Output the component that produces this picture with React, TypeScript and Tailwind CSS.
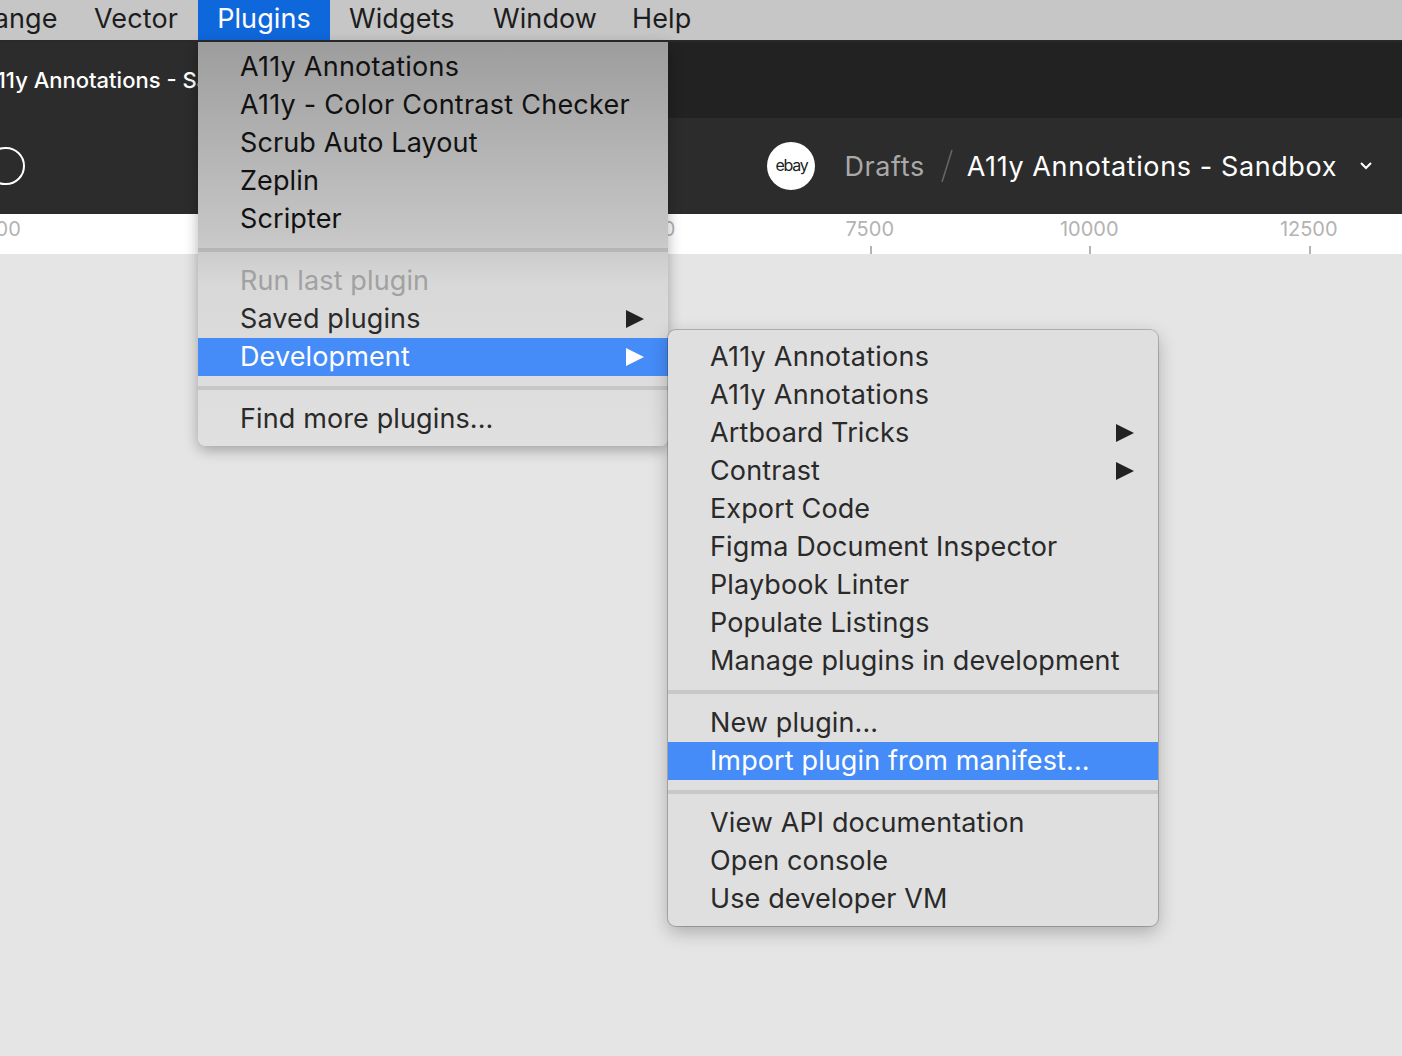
const font = "font-['Inter','Noto_Sans',sans-serif]";

function Arrow({ white }: { white?: boolean }) {
  return (
    <svg width="18" height="18" viewBox="0 0 18 18" className={white ? "fill-white" : "fill-[#222]"}>
      <path d="M0 0 L18 9 L0 18 Z" />
    </svg>
  );
}

function Item({
  label,
  active,
  disabled,
  arrow,
  dark,
}: {
  label: string;
  active?: boolean;
  disabled?: boolean;
  arrow?: boolean;
  dark?: boolean;
}) {
  let color = "text-[#2a2a2a]";
  if (dark) color = "text-[#111]";
  if (disabled) color = "text-[#a1a1a1]";
  if (active) color = "text-white";
  const spacing = label.startsWith("A11y") ? "tracking-[0.25px]" : "tracking-[0.12px]";
  return (
    <div
      className={`flex h-[38px] items-center justify-between pl-[42px] pr-[24px] whitespace-nowrap text-[27px] ${spacing} ${color} ${
        active ? "bg-[#458cf8]" : ""
      }`}
    >
      <span>{label}</span>
      {arrow && <Arrow white={active} />}
    </div>
  );
}

function Sep() {
  return <div className="my-2.5 h-1 bg-black/10" />;
}

const ticks = ["-2500", "0", "2500", "5000", "7500", "10000", "12500"];

export default function App() {
  return (
    <div className={`relative h-[1056px] w-[1402px] overflow-hidden bg-[#e5e5e5] ${font}`}>
      {/* mac menu bar */}
      <div className="flex h-10 items-center overflow-hidden bg-[#c6c6c6] text-[27px] tracking-[0.1px] text-[#1d1d1d]">
        <span className="-ml-[46px] w-[140px] pb-[2px]">Arrange</span>
        <span className="w-[104px] pb-[2px]">Vector</span>
        <span className="flex h-full w-[132px] items-center justify-center bg-[#0f67dc] pb-[2px] text-white">Plugins</span>
        <span className="ml-[19px] w-[144px] pb-[2px]">Widgets</span>
        <span className="w-[139px] pb-[2px]">Window</span>
        <span className="pb-[2px]">Help</span>
      </div>
      <div className="h-0.5 bg-[#2a2a2a]" />

      {/* tab bar */}
      <div className="h-[76px] bg-[#222222]">
        <div className="flex h-full w-[198px] items-center overflow-hidden bg-[#2c2c2c]">
          <span className="-ml-[18px] whitespace-nowrap text-[22px] font-medium text-white">
            A11y Annotations - Sandbox
          </span>
        </div>
      </div>

      {/* toolbar */}
      <div className="flex h-24 items-center justify-between bg-[#2c2c2c] pr-[30px]">
        <div className="-ml-[14px] h-[38px] w-[39px] rounded-full border-2 border-white" />
        <div className="flex items-center">
          <div className="flex h-12 w-12 items-center justify-center rounded-full bg-white pb-[2px] text-base tracking-[-1.3px] text-[#222]">
            ebay
          </div>
          <span className="ml-[29px] pt-[2px] text-[27px] tracking-[0.6px] text-[#a9a9a9]">Drafts</span>
          <svg width="14" height="34" viewBox="0 0 14 34" className="ml-[15px] stroke-[#666]">
            <path d="M12 1 L2 33" strokeWidth="1.5" fill="none" />
          </svg>
          <span className="ml-[13px] pt-[2px] text-[27px] tracking-[0.6px] text-white">A11y Annotations - Sandbox</span>
          <svg width="12" height="8" viewBox="0 0 12 8" className="ml-[23px] stroke-white">
            <path d="M1 1 L6 6 L11 1" strokeWidth="2" fill="none" />
          </svg>
        </div>
      </div>

      {/* ruler */}
      <div className="flex h-10 overflow-hidden bg-white pt-px">
        {ticks.map((t, i) => (
          <div key={t} className={`relative w-[219.5px] shrink-0 text-center text-xl text-[#b3b3b3] ${i === 0 ? "-ml-[118px]" : ""}`}>
            {t}
            <div className="absolute bottom-0 left-1/2 h-2 w-0.5 bg-[#b3b3b3]" />
          </div>
        ))}
      </div>

      {/* plugins dropdown */}
      <div className="absolute left-[198px] top-[42px] w-[470px] rounded-b-lg bg-[linear-gradient(180deg,#9d9d9d_0%,#c6c6c6_48%,#d8d8d8_60%,#e0e0e0_100%)] pt-1.5 pb-2 shadow-[0_4px_14px_rgba(0,0,0,0.3)]">
        <Item dark label="A11y Annotations" />
        <Item dark label="A11y - Color Contrast Checker" />
        <Item dark label="Scrub Auto Layout" />
        <Item dark label="Zeplin" />
        <Item dark label="Scripter" />
        <Sep />
        <Item disabled label="Run last plugin" />
        <Item arrow label="Saved plugins" />
        <Item active arrow label="Development" />
        <Sep />
        <Item label="Find more plugins..." />
      </div>

      {/* development submenu */}
      <div className="absolute left-[668px] top-[330px] w-[490px] rounded-lg bg-[#dfdfdf] py-2 shadow-[0_0_0_1px_rgba(0,0,0,0.2),0_6px_18px_rgba(0,0,0,0.25)]">
        <Item label="A11y Annotations" />
        <Item label="A11y Annotations" />
        <Item arrow label="Artboard Tricks" />
        <Item arrow label="Contrast" />
        <Item label="Export Code" />
        <Item label="Figma Document Inspector" />
        <Item label="Playbook Linter" />
        <Item label="Populate Listings" />
        <Item label="Manage plugins in development" />
        <Sep />
        <Item label="New plugin..." />
        <Item active label="Import plugin from manifest..." />
        <Sep />
        <Item label="View API documentation" />
        <Item label="Open console" />
        <Item label="Use developer VM" />
      </div>
    </div>
  );
}
